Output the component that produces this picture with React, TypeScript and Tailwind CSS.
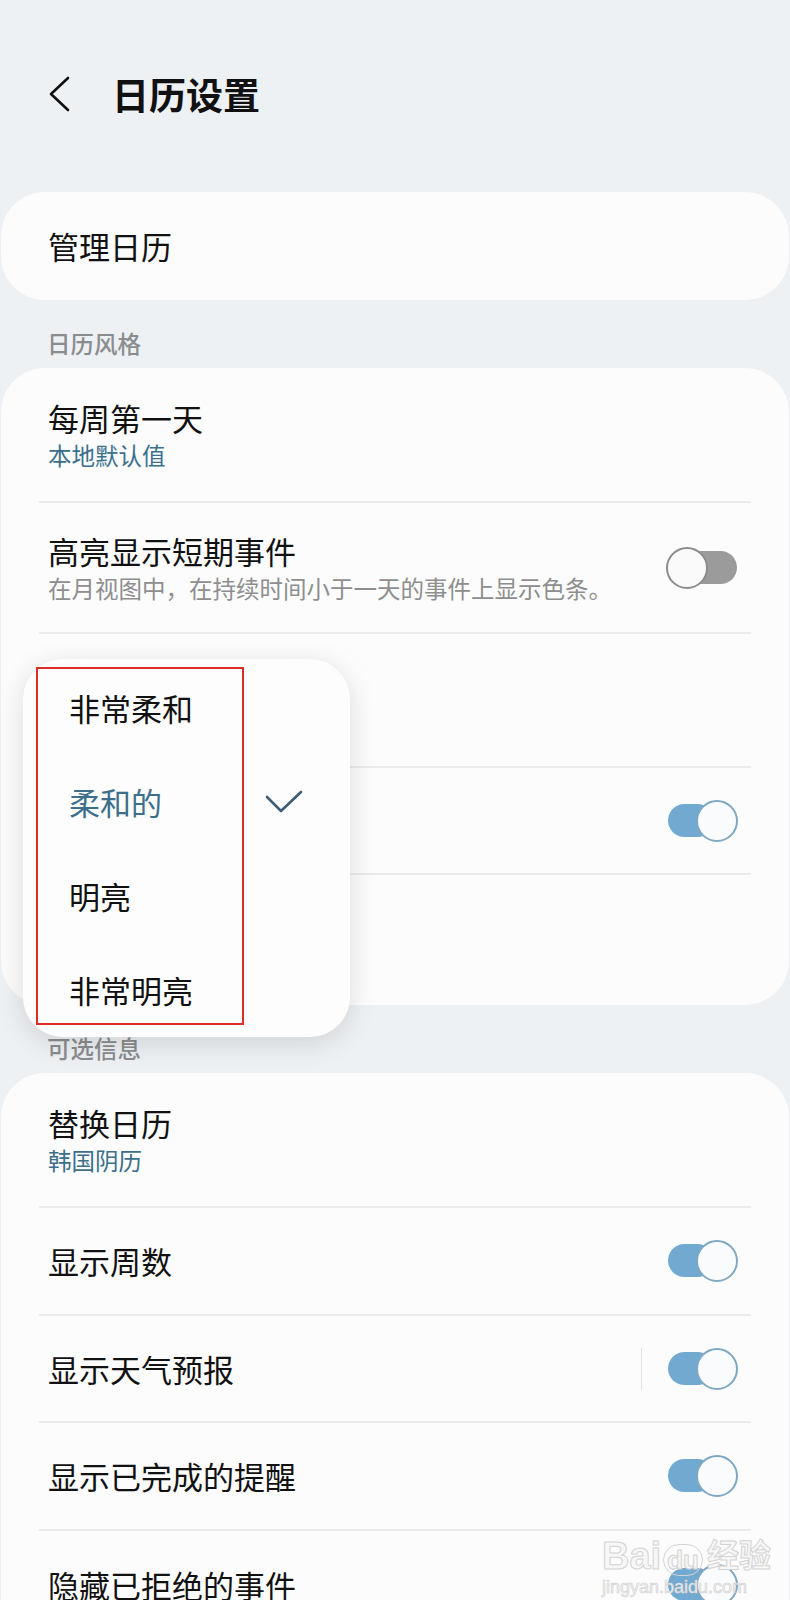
import React from 'react'

const TEAL = 'text-[#3b6f8c]'

function Toggle({ on }: { on: boolean }) {
  if (on) {
    return (
      <div className="relative w-[72px] h-[42px] shrink-0">
        <div className="absolute left-[2px] right-[24px] top-[4px] bottom-[5px] rounded-full bg-[#72a9d1]" />
        <div className="absolute right-0 top-0 w-[42px] h-[42px] rounded-full bg-[#fafbfc] border-[2.5px] border-[#7ea8c2]" />
      </div>
    )
  }
  return (
    <div className="relative w-[72px] h-[42px] shrink-0">
      <div className="absolute left-[13px] right-[1px] top-[4px] bottom-[5px] rounded-full bg-[#9b9b9b]" />
      <div className="absolute left-0 top-0 w-[42px] h-[42px] rounded-full bg-[#fafafa] border-[2.5px] border-[#8c8c8c]" />
    </div>
  )
}

function Row({
  title,
  sub,
  subTeal,
  toggle,
  sep,
  h,
}: {
  title?: string
  sub?: string
  subTeal?: boolean
  toggle?: 'on' | 'off'
  sep?: boolean
  h: string
}) {
  return (
    <div className={`flex items-center pl-[47px] pr-[51px] ${h}`}>
      <div className="flex flex-col flex-1 min-w-0">
        {title && <span className="text-[31px] leading-[36px] text-[#111]">{title}</span>}
        {sub && (
          <span className={`text-[23.5px] leading-[28px] mt-[5px] ${subTeal ? TEAL : 'text-[#8e8e8e]'}`}>{sub}</span>
        )}
      </div>
      {sep && <div className="w-px h-[42px] bg-[#e3e3e3] mr-[24px]" />}
      {toggle && <Toggle on={toggle === 'on'} />}
    </div>
  )
}

function Divider() {
  return <div className="h-[2px] mx-[38px] bg-[#ebebeb]" />
}

function SectionHeader({ text }: { text: string }) {
  return (
    <div className="h-[68px] pt-[29px] pl-[47px]">
      <span className="text-[23.5px] leading-[28px] font-medium text-[#8a8c8e]">{text}</span>
    </div>
  )
}

const options = ['非常柔和', '柔和的', '明亮', '非常明亮']

export default function App() {
  return (
    <div className="relative min-h-[1600px] overflow-hidden bg-[#eef1f4] font-['Noto_Sans_CJK_SC','Noto_Sans',sans-serif]">
      <div className="h-[188px] mb-[4px] flex items-center pl-[47px]">
        <svg width="24" height="38" viewBox="0 0 24 38" fill="none">
          <path d="M21 3 L4 19 L21 35" stroke="#111" strokeWidth="2.6" strokeLinecap="round" strokeLinejoin="round" />
        </svg>
        <h1 className="ml-[41px] text-[37px] leading-[44px] font-bold text-[#111]">日历设置</h1>
      </div>

      <div className="mx-px rounded-[44px] bg-[#fcfcfd]">
        <Row title="管理日历" h="h-[108px]" />
      </div>

      <SectionHeader text="日历风格" />

      <div className="relative mx-px rounded-[44px] bg-[#fcfcfd]">
        <Row title="每周第一天" sub="本地默认值" subTeal h="h-[133px]" />
        <Divider />
        <Row title="高亮显示短期事件" sub="在月视图中，在持续时间小于一天的事件上显示色条。" toggle="off" h="h-[129px]" />
        <Divider />
        <Row h="h-[132px]" />
        <Divider />
        <Row toggle="on" h="h-[105px]" />
        <Divider />
        <Row h="h-[130px]" />

        <div className="absolute left-[22px] top-[291px] w-[327px] pt-[2px] rounded-[40px] bg-[#fdfdfd] shadow-[0_6px_28px_rgba(0,0,0,0.13)]">
          {options.map((o, i) => (
            <div key={o} className="h-[94px] flex items-center pl-[46px]">
              <span className={`w-[196px] text-[31px] leading-[36px] ${i === 1 ? TEAL : 'text-[#111]'}`}>{o}</span>
              {i === 1 && (
                <svg width="38" height="24" viewBox="0 0 38 24" fill="none">
                  <path d="M2 7 L16 21 L36 2" stroke="#3f5d72" strokeWidth="2.6" strokeLinecap="round" strokeLinejoin="round" />
                </svg>
              )}
            </div>
          ))}
          <div className="absolute left-[13px] top-[8px] w-[208px] h-[358px] border-2 border-[#de2d26]" />
        </div>
      </div>

      <SectionHeader text="可选信息" />

      <div className="mx-px rounded-[44px] bg-[#fcfcfd] pb-[40px]">
        <Row title="替换日历" sub="韩国阴历" subTeal h="h-[133px]" />
        <Divider />
        <Row title="显示周数" toggle="on" h="h-[106px]" />
        <Divider />
        <Row title="显示天气预报" toggle="on" sep h="h-[105px]" />
        <Divider />
        <Row title="显示已完成的提醒" toggle="on" h="h-[106px]" />
        <Divider />
        <Row title="隐藏已拒绝的事件" toggle="on" h="h-[108px]" />
      </div>

      <div className="absolute left-[602px] top-[1536px] flex flex-col items-start pointer-events-none select-none font-['Liberation_Sans','Noto_Sans_CJK_SC',sans-serif]">
        <div className="flex items-end text-[38px] leading-[40px] font-bold text-[#f7f7f7] [-webkit-text-stroke:1px_#d4d4d4]">
          <span>Bai</span>
          <span className="ml-[2px] text-[26px] leading-[30px] px-[3px] rounded-full border border-[#d4d4d4]">du</span>
          <span className="ml-[4px] text-[32px]">经验</span>
        </div>
        <span className="text-[18px] leading-[22px] text-[#f2f2f2] [-webkit-text-stroke:0.6px_#d0d0d0]">jingyan.baidu.com</span>
      </div>
    </div>
  )
}
